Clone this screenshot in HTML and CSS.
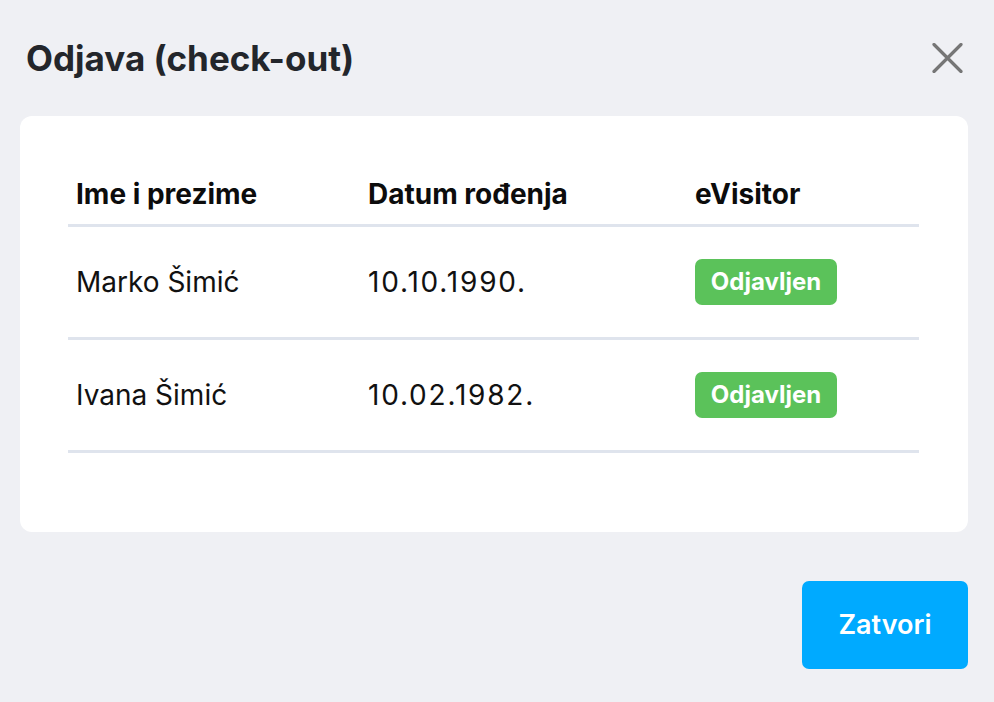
FILE: index.html
```html
<!DOCTYPE html>
<html lang="hr">
<head>
<meta charset="utf-8">
<title>Odjava (check-out)</title>
<link rel="stylesheet" href="styles.css">
</head>
<body>
<div class="modal">
  <div class="modal-header">
    <h1 class="title">Odjava (check-out)</h1>
    <button class="close" aria-label="Zatvori">
      <svg width="31" height="30" viewBox="0 0 31 30"><path d="M2 1.5 L29 28.5 M29 1.5 L2 28.5" stroke="#767676" stroke-width="3.2" stroke-linecap="round" fill="none"/></svg>
    </button>
  </div>
  <div class="card">
    <table class="guests">
      <thead>
        <tr><th class="c1">Ime i prezime</th><th class="c2">Datum rođenja</th><th class="c3">eVisitor</th></tr>
      </thead>
      <tbody>
        <tr><td>Marko Šimić</td><td class="date">10.10.1990.</td><td><span class="badge">Odjavljen</span></td></tr>
        <tr><td>Ivana Šimić</td><td class="date">10.02.1982.</td><td><span class="badge">Odjavljen</span></td></tr>
      </tbody>
    </table>
  </div>
  <div class="footer">
    <button class="btn-primary">Zatvori</button>
  </div>
</div>
</body>
</html>
```
FILE: styles.css
```css
* { box-sizing: border-box; }
html, body { margin: 0; padding: 0; }
body {
  background: #eff0f4;
  font-family: Inter, "Noto Sans", sans-serif;
  color: #111;
  width: 994px;
  height: 702px;
  overflow: hidden;
}
.modal { padding: 0 26px 0 20px; }
.modal-header {
  height: 116px;
  display: flex;
  align-items: center;
  justify-content: space-between;
  padding-left: 6px;
}
.title {
  margin: 0;
  font-size: 35px;
  line-height: 1.2;
  font-weight: 700;
  color: #23262b;
}
.close {
  border: 0;
  background: none;
  padding: 0;
  margin-right: 5px;
  width: 31px;
  height: 30px;
  display: flex;
}
.card {
  background: #fff;
  border-radius: 12px;
  padding: 48px 49px 79px 48px;
}
.guests {
  width: 100%;
  border-collapse: collapse;
}
.guests th {
  text-align: left;
  font-size: 28px;
  font-weight: 700;
  height: 61px;
  padding: 0 8px;
  border-bottom: 3px solid #dfe4ed;
  color: #0c0c0c;
}
.guests th.c1 { width: 292px; }
.guests th.c2 { width: 327px; }
.guests td {
  height: 113px;
  padding: 0 8px;
  font-size: 28px;
  border-bottom: 3px solid #dfe4ed;
  vertical-align: middle;
  color: #111;
}
.guests td.date { letter-spacing: 1.8px; }
.badge {
  display: inline-flex;
  align-items: center;
  justify-content: center;
  width: 142px;
  height: 46px;
  background: #5bc25a;
  color: #fff;
  font-weight: 700;
  font-size: 24px;
  letter-spacing: 0;
  border-radius: 7px;
}
.footer {
  display: flex;
  justify-content: flex-end;
  padding-top: 49px;
}
.btn-primary {
  width: 166px;
  height: 88px;
  border: 0;
  border-radius: 7px;
  background: #00aaff;
  color: #fff;
  font-family: Inter, "Noto Sans", sans-serif;
  font-size: 27px;
  font-weight: 600;
}
```
